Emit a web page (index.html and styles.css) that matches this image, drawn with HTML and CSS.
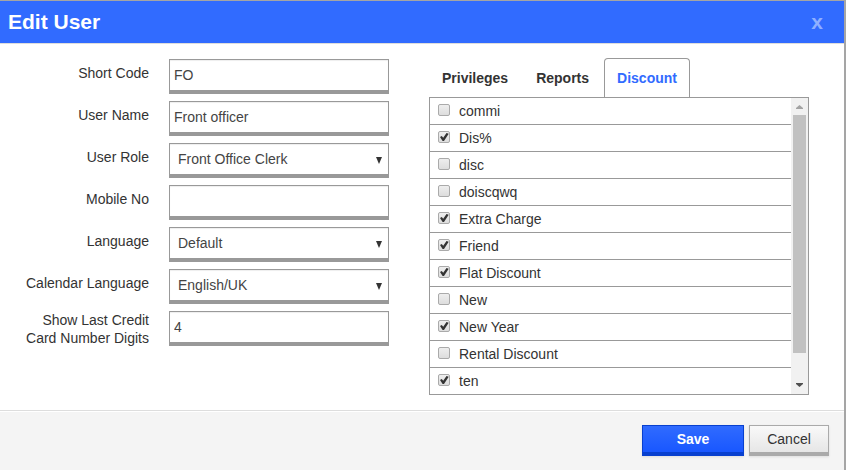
FILE: index.html
```html
<!DOCTYPE html>
<html lang="en">
<head>
<meta charset="utf-8">
<title>Edit User</title>
<link rel="stylesheet" href="styles.css">
</head>
<body>
<form class="dialog">
  <header class="dialog-header">
    <h1>Edit User</h1>
    <button type="button" class="close" aria-label="Close">x</button>
  </header>
  <main class="dialog-body">
    <div class="fields">
      <div class="field"><label for="code">Short Code</label><input class="control" id="code" type="text" value="FO"></div>
      <div class="field"><label for="name">User Name</label><input class="control" id="name" type="text" value="Front officer"></div>
      <div class="field"><label for="role">User Role</label><span class="select"><select class="control" id="role"><option>Front Office Clerk</option></select><svg class="caret" viewBox="0 0 6 7"><path d="M0 0h6L3 7z"/></svg></span></div>
      <div class="field"><label for="mobile">Mobile No</label><input class="control" id="mobile" type="text"></div>
      <div class="field"><label for="lang">Language</label><span class="select"><select class="control" id="lang"><option>Default</option></select><svg class="caret" viewBox="0 0 6 7"><path d="M0 0h6L3 7z"/></svg></span></div>
      <div class="field"><label for="cal">Calendar Language</label><span class="select"><select class="control" id="cal"><option>English/UK</option></select><svg class="caret" viewBox="0 0 6 7"><path d="M0 0h6L3 7z"/></svg></span></div>
      <div class="field"><label class="two-line" for="digits">Show Last Credit<br>Card Number Digits</label><input class="control" id="digits" type="text" value="4"></div>
    </div>
    <section class="rights">
      <div class="tabs" role="tablist">
        <button type="button" class="tab" role="tab">Privileges</button>
        <button type="button" class="tab" role="tab">Reports</button>
        <button type="button" class="tab active" role="tab" aria-selected="true">Discount</button>
      </div>
      <div class="panel">
        <div class="options">
          <label class="option"><input type="checkbox">commi</label>
          <label class="option"><input type="checkbox" checked>Dis%</label>
          <label class="option"><input type="checkbox">disc</label>
          <label class="option"><input type="checkbox">doiscqwq</label>
          <label class="option"><input type="checkbox" checked>Extra Charge</label>
          <label class="option"><input type="checkbox" checked>Friend</label>
          <label class="option"><input type="checkbox" checked>Flat Discount</label>
          <label class="option"><input type="checkbox">New</label>
          <label class="option"><input type="checkbox" checked>New Year</label>
          <label class="option"><input type="checkbox">Rental Discount</label>
          <label class="option"><input type="checkbox" checked>ten</label>
        </div>
        <div class="scrollbar" aria-hidden="true">
          <svg class="arrow up" viewBox="0 0 17 17"><path d="M5 11h7v-1L8.500 7 5 10z"/></svg>
          <div class="track"><div class="thumb"></div></div>
          <svg class="arrow" viewBox="0 0 17 17"><path d="M5 6h7v1l-3.500 3L5 7z"/></svg>
        </div>
      </div>
    </section>
  </main>
  <footer class="dialog-footer">
    <button type="button" class="button primary">Save</button>
    <button type="button" class="button">Cancel</button>
  </footer>
</form>
</body>
</html>
```
FILE: styles.css
```css
* {
  box-sizing: border-box;
}

body {
  margin: 0;
  min-height: 100vh;
  padding: 1px 2px 0 0;
  display: flex;
  background: #a5a5a5;
  color: #333;
  font: 14px/18px "Liberation Sans", Arial, sans-serif;
}

button, input, select {
  font: inherit;
  color: inherit;
}

.dialog {
  flex: 1;
  display: flex;
  flex-direction: column;
  background: #fff;
}

.dialog-header {
  display: flex;
  align-items: center;
  justify-content: space-between;
  height: 43px;
  padding: 0 21px 0 8px;
  background: #316bff;
  border-bottom: 1px solid #ddd;
  color: #fff;
}

h1 {
  margin: 0;
  font-size: 21px;
  line-height: 24px;
}

.close {
  padding: 0;
  border: 0;
  background: none;
  color: #8fb0ff;
  font-weight: bold;
  font-size: 21px;
}

.dialog-body {
  flex: 1;
  display: flex;
  align-items: flex-start;
  gap: 40px;
  padding: 14px 35px 15px 0;
}

.fields {
  flex: 389;
  display: flex;
  flex-direction: column;
  gap: 7px;
  padding-top: 1px;
}

.field {
  display: flex;
  align-items: flex-start;
  gap: 20px;
}

.field label {
  flex: 1;
  padding-top: 5px;
  text-align: right;
  white-space: nowrap;
}

.field .two-line {
  padding-top: 0;
}

.control {
  display: block;
  width: 220px;
  height: 35px;
  padding: 0 4px 1px;
  border: 1px solid #999;
  border-bottom-width: 4px;
  border-radius: 0;
  background: #fff;
  box-shadow: inset 0 1px 1px #eee;
  color: #444;
}

.select {
  position: relative;
}

.select .control {
  appearance: none;
  padding-left: 8px;
}

.caret {
  position: absolute;
  right: 7px;
  top: 14px;
  width: 6px;
  height: 7px;
  fill: #333;
}

.rights {
  flex: 380;
}

.tabs {
  display: flex;
  gap: 2px;
}

.tab {
  height: 39px;
  padding: 0 12px;
  border: 1px solid transparent;
  border-bottom: 0;
  border-radius: 4px 4px 0 0;
  background: none;
  font-weight: bold;
}

.active {
  border-color: #999;
  color: #316bff;
}

.panel {
  display: flex;
  height: 298px;
  border: 1px solid #999;
}

.options {
  flex: 1;
  overflow-y: auto;
  scrollbar-width: none;
}

.option {
  display: flex;
  align-items: center;
  gap: 9px;
  height: 27px;
  padding-left: 8px;
  border-bottom: 1px solid #999;
}

.option:last-child {
  height: 26px;
  border-bottom: 0;
}

.option input {
  appearance: none;
  width: 12px;
  height: 12px;
  margin: 0 0 2px;
  border: 1px solid #aaa;
  border-radius: 2px;
  background: linear-gradient(#eee, #ddd);
}

.option input:checked::before {
  content: "";
  display: block;
  height: 10px;
  background: #333;
  clip-path: polygon(10% 50%, 28% 40%, 42% 58%, 75% 10%, 97% 18%, 50% 90%, 36% 90%);
}

.scrollbar {
  display: flex;
  flex-direction: column;
  width: 17px;
  background: #f1f1f1;
}

.arrow {
  width: 17px;
  height: 17px;
  fill: #505050;
}

.up {
  fill: #a3a3a3;
}

.track {
  flex: 1;
  padding: 0 2px;
}

.thumb {
  height: 91%;
  background: #c1c1c1;
}

.dialog-footer {
  display: flex;
  justify-content: flex-end;
  gap: 5px;
  padding: 14px 15px;
  border-top: 1px solid #ddd;
  background: #f4f4f4;
  box-shadow: inset 0 1px #fff;
}

.button {
  width: 80px;
  height: 31px;
  padding: 0;
  border: 1px solid #aaa;
  border-bottom-width: 4px;
  background: linear-gradient(#f9f9f9, #e6e6e6);
  box-shadow: 0 1px 2px #ddd;
}

.primary {
  width: 102px;
  border-color: #0840cf;
  background: linear-gradient(#306bff, #1957ff);
  color: #fff;
  font-weight: bold;
}
```
